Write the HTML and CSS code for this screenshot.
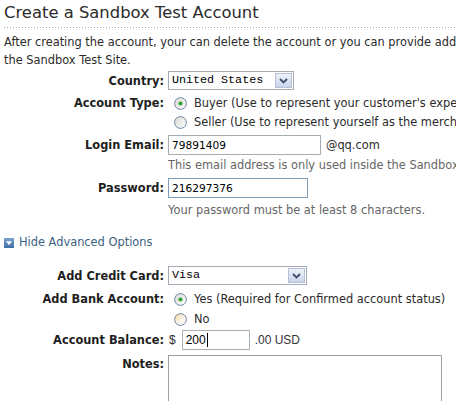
FILE: index.html
```html
<!DOCTYPE html>
<html>
<head>
<meta charset="utf-8">
<link rel="stylesheet" href="styles.css">
</head>
<body>
<div class="page">
  <h1 class="title">Create a Sandbox Test Account</h1>
  <p class="intro">After creating the account, your can delete the account or you can provide additional account details for<br>the Sandbox Test Site.</p>

  <div class="row row-country">
    <span class="lbl">Country:</span>
    <div class="ctl">
      <div class="select sel-country">
        <span class="sel-text">United States</span>
        <span class="sel-btn"><svg width="9" height="6" viewBox="0 0 9 6"><path d="M1 1 L4.5 4.5 L8 1" fill="none" stroke="#3d4f70" stroke-width="1.8"/></svg></span>
      </div>
    </div>
  </div>

  <div class="row row-buyer">
    <span class="lbl">Account Type:</span>
    <div class="ctl">
      <svg class="radio" width="13" height="13" viewBox="0 0 13 13"><defs><linearGradient id="rg1" x1="0" y1="0" x2="1" y2="1"><stop offset="0" stop-color="#d8d8d2"/><stop offset="1" stop-color="#ffffff"/></linearGradient></defs><circle cx="6.5" cy="6.5" r="5.9" fill="url(#rg1)" stroke="#7088a8"/><circle cx="6.5" cy="6.5" r="2.1" fill="#2fa52f"/></svg>
      <span class="opt">Buyer (Use to represent your customer's experience)</span>
    </div>
  </div>

  <div class="row row-seller">
    <span class="lbl"></span>
    <div class="ctl">
      <svg class="radio" width="13" height="13" viewBox="0 0 13 13"><defs><linearGradient id="rg2" x1="0" y1="0" x2="1" y2="1"><stop offset="0" stop-color="#d8d8d2"/><stop offset="1" stop-color="#ffffff"/></linearGradient></defs><circle cx="6.5" cy="6.5" r="5.9" fill="url(#rg2)" stroke="#7088a8"/></svg>
      <span class="opt">Seller (Use to represent yourself as the merchant)</span>
    </div>
  </div>

  <div class="row row-email">
    <span class="lbl">Login Email:</span>
    <div class="ctl">
      <span class="input in-email">79891409</span>
      <span class="after">@qq.com</span>
    </div>
  </div>
  <div class="help help-email">This email address is only used inside the Sandbox Test Site.</div>

  <div class="row row-pass">
    <span class="lbl">Password:</span>
    <div class="ctl">
      <span class="input in-pass">216297376</span>
    </div>
  </div>
  <div class="help help-pass">Your password must be at least 8 characters.</div>

  <div class="adv">
    <svg class="adv-icon" width="10" height="10" viewBox="0 0 10 10"><defs><linearGradient id="ag" x1="0" y1="0" x2="0" y2="1"><stop offset="0" stop-color="#7aa2d0"/><stop offset="1" stop-color="#3f6ea5"/></linearGradient></defs><rect x="0" y="0" width="10" height="10" fill="url(#ag)"/><path d="M2 3.2 L8 3.2 L5 7.2 Z" fill="#ffffff"/></svg>
    <span class="adv-link">Hide Advanced Options</span>
  </div>

  <div class="row row-card">
    <span class="lbl">Add Credit Card:</span>
    <div class="ctl">
      <div class="select sel-card">
        <span class="sel-text">Visa</span>
        <span class="sel-btn"><svg width="9" height="6" viewBox="0 0 9 6"><path d="M1 1 L4.5 4.5 L8 1" fill="none" stroke="#3d4f70" stroke-width="1.8"/></svg></span>
      </div>
    </div>
  </div>

  <div class="row row-bank">
    <span class="lbl">Add Bank Account:</span>
    <div class="ctl">
      <svg class="radio" width="13" height="13" viewBox="0 0 13 13"><defs><linearGradient id="rg3" x1="0" y1="0" x2="1" y2="1"><stop offset="0" stop-color="#d8d8d2"/><stop offset="1" stop-color="#ffffff"/></linearGradient></defs><circle cx="6.5" cy="6.5" r="5.9" fill="url(#rg3)" stroke="#7088a8"/><circle cx="6.5" cy="6.5" r="2.1" fill="#2fa52f"/></svg>
      <span class="opt">Yes (Required for Confirmed account status)</span>
    </div>
  </div>

  <div class="row row-no">
    <span class="lbl"></span>
    <div class="ctl">
      <svg class="radio" width="13" height="13" viewBox="0 0 13 13"><defs><linearGradient id="rg4" x1="0" y1="0" x2="1" y2="1"><stop offset="0" stop-color="#f3d58a"/><stop offset="0.5" stop-color="#f7f3ea"/><stop offset="1" stop-color="#ffffff"/></linearGradient></defs><circle cx="6.5" cy="6.5" r="5.9" fill="url(#rg4)" stroke="#7088a8"/></svg>
      <span class="opt">No</span>
    </div>
  </div>

  <div class="row row-balance">
    <span class="lbl">Account Balance:</span>
    <div class="ctl">
      <span class="dollar">$</span>
      <span class="input in-balance">200<span class="caret"></span></span>
      <span class="usd">.00 USD</span>
    </div>
  </div>

  <div class="row row-notes">
    <span class="lbl">Notes:</span>
    <div class="ctl">
      <div class="textarea"></div>
    </div>
  </div>
</div>
</body>
</html>
```
FILE: styles.css
```css
html, body {
  margin: 0;
  padding: 0;
  overflow: hidden;
  background: #ffffff;
}
.page {
  width: 640px;
  padding: 0 4px;
  font-family: "DejaVu Sans", Verdana, sans-serif;
  font-size: 11.4px;
  color: #2b2b2b;
}
.title {
  margin: 0;
  padding: 3px 0 5px;
  font-size: 16.4px;
  font-weight: normal;
  line-height: 20px;
  color: #2b2b2b;
  width: 452px;
  background: linear-gradient(to right, #a8a8a8 0 1px, transparent 1px) left bottom / 3px 1px repeat-x;
}
.intro {
  margin: 5px 0 0;
  line-height: 18px;
  white-space: nowrap;
}
.row {
  display: flex;
  align-items: center;
  white-space: nowrap;
}
.lbl {
  width: 160px;
  flex: none;
  text-align: right;
  font-weight: bold;
  color: #1e1e1e;
}
.ctl {
  margin-left: 4px;
  display: flex;
  align-items: center;
}
.row-country { margin-top: 2px; height: 19px; }
.row-buyer { margin-top: 4px; height: 18px; }
.row-seller { margin-top: 1px; height: 18px; }
.row-email { margin-top: 4px; height: 20px; }
.row-pass { margin-top: 4px; height: 20px; }
.row-card { margin-top: 15px; height: 19px; }
.row-bank { margin-top: 5px; height: 18px; }
.row-no { margin-top: 2px; height: 18px; }
.row-balance { margin-top: 2px; height: 20px; }
.row-notes { margin-top: 5px; align-items: flex-start; }
.row-notes .lbl { line-height: 18px; }

.select {
  box-sizing: border-box;
  height: 19px;
  border: 1px solid #a5acb5;
  display: flex;
  align-items: stretch;
  background: #fff;
  padding: 1px;
}
.sel-country { width: 126px; }
.sel-card { width: 139px; }
.sel-text {
  flex: 1;
  font-family: "Liberation Mono", monospace;
  font-size: 11.7px;
  line-height: 15px;
  padding-left: 2px;
  color: #000;
}
.sel-btn {
  box-sizing: border-box;
  width: 17px;
  border: 1px solid #b5c1d8;
  background: linear-gradient(#eef2fa, #c9d4ea);
  display: flex;
  align-items: center;
  justify-content: center;
}
.radio {
  flex: none;
  margin-left: 6px;
}
.opt {
  margin-left: 7px;
  line-height: 18px;
}
.input {
  box-sizing: border-box;
  height: 20px;
  border: 1px solid #a8b0b8;
  background: #fff;
  padding: 0 3px;
  line-height: 18px;
  color: #000;
  font-size: 10.6px;
}
.in-email { width: 153px; border-color: #a5acb2; }
.in-pass { width: 140px; border-color: #7f9db9; }
.after { margin-left: 5px; }
.help {
  margin-top: 1px;
  margin-left: 164px;
  line-height: 18px;
  color: #666666;
  white-space: nowrap;
}
.help-pass { margin-top: 3px; }
.adv {
  margin-top: 14px;
  height: 18px;
  display: flex;
  align-items: center;
}
.adv-icon { flex: none; margin-top: 1px; }
.adv-link {
  margin-left: 5px;
  color: #3a6282;
}
.dollar {
  margin-left: 1px;
  font-family: "Liberation Sans", Arial, sans-serif;
  font-size: 12px;
}
.in-balance {
  margin-left: 6px;
  width: 68px;
  font-family: "Liberation Sans", Arial, sans-serif;
  font-size: 12px;
  display: flex;
  align-items: center;
  padding-left: 3px;
}
.caret {
  display: inline-block;
  width: 1px;
  height: 14px;
  background: #000;
  margin-left: 1px;
}
.usd {
  margin-left: 5px;
  font-family: "Liberation Sans", Arial, sans-serif;
  font-size: 12px;
  color: #333;
}
.textarea {
  box-sizing: border-box;
  width: 274px;
  height: 90px;
  border: 1px solid #a0a0a0;
  background: #fff;
}
```
